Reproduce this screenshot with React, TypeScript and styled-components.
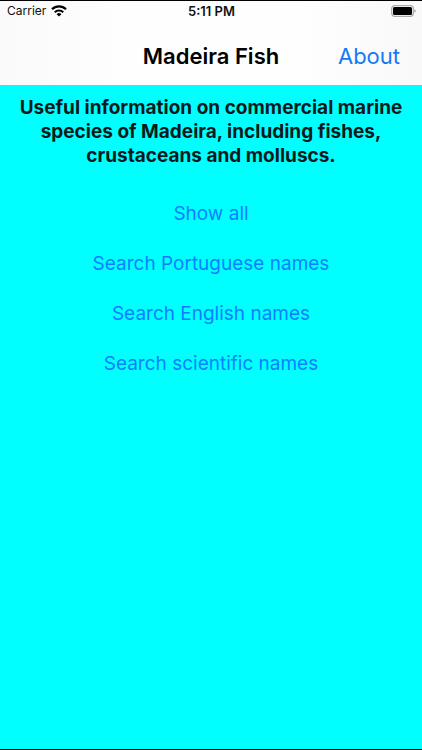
import React from "react";
import styled, { createGlobalStyle } from "styled-components";

const GlobalStyle = createGlobalStyle`
  * { box-sizing: border-box; }
  body { margin: 0; background: #00ffff; font-family: Inter, "Liberation Sans", sans-serif; }
`;
const Screen = styled.div`
  min-height: 100vh;
  display: flex;
  flex-direction: column;
  background: #00ffff;
  border-top: 1px solid #000;
  border-bottom: 1px solid #000;
`;
const TopArea = styled.header`
  background: linear-gradient(90deg, #fafafa, #fefefe 30%, #fefefe 70%, #f9f9f9);
`;
const StatusBar = styled.div`
  height: 20px;
  padding: 0 6px 0 7px;
  display: grid;
  grid-template-columns: 1fr auto 1fr;
  align-items: center;
  font-size: 12px;
  line-height: 16px;
  color: #111;
`;
const Carrier = styled.div`
  display: flex;
  align-items: center;
  gap: 5px;
`;
const Clock = styled.time`
  font-size: 13px;
  font-weight: 600;
`;
const Battery = styled.svg`
  justify-self: end;
`;
const NavBar = styled.nav`
  height: 64px;
  padding: 6px 22px 0;
  display: grid;
  grid-template-columns: 1fr auto 1fr;
  align-items: center;
`;
const Title = styled.h1`
  grid-column: 2;
  margin: 0;
  font-size: 22px;
  line-height: 28px;
  font-weight: 600;
  color: #000;
`;
const NavButton = styled.button`
  justify-self: end;
  border: 0;
  padding: 0;
  background: none;
  font: inherit;
  font-size: 22px;
  line-height: 28px;
  color: #1579f4;
`;
const Main = styled.main`
  display: flex;
  flex-direction: column;
  align-items: center;
  padding: 11px 12px;
`;
const Intro = styled.p`
  margin: 0 0 32px;
  font-size: 19px;
  line-height: 24px;
  font-weight: 700;
  text-align: center;
  color: #0b1a1a;
`;
const Menu = styled.div`
  display: flex;
  flex-direction: column;
  align-items: center;
  gap: 22px;
`;
const MenuButton = styled.button`
  border: 0;
  padding: 0;
  background: none;
  font: inherit;
  font-size: 19px;
  line-height: 28px;
  color: #0a7fff;
`;

const actions = ["Show all", "Search Portuguese names", "Search English names", "Search scientific names"];

export default function App() {
  return (
    <Screen>
      <GlobalStyle />
      <TopArea>
        <StatusBar>
          <Carrier>
            Carrier
            <svg width="16" height="12" viewBox="0 0 16 12" aria-hidden="true">
              <g fill="none" stroke="#000" strokeWidth="2.2">
                <path d="M1 4.3a10 10 0 0 1 14 0" />
                <path d="M3.8 7.2a6 6 0 0 1 8.4 0" />
              </g>
              <path d="M8 11.6 5.6 9.2a3.4 3.4 0 0 1 4.8 0z" />
            </svg>
          </Carrier>
          <Clock>5:11 PM</Clock>
          <Battery width="25" height="12" viewBox="0 0 25 12" aria-hidden="true">
            <rect x="0.7" y="0.7" width="21.6" height="10.6" rx="3" fill="#fff" stroke="#aaa" strokeWidth="1.3" />
            <rect x="2" y="2" width="19" height="8" rx="1.5" />
            <path d="M23.5 4.2a2 2 0 0 1 0 3.6z" fill="#888" />
          </Battery>
        </StatusBar>
        <NavBar>
          <Title>Madeira Fish</Title>
          <NavButton type="button">About</NavButton>
        </NavBar>
      </TopArea>
      <Main>
        <Intro>Useful information on commercial marine species of Madeira, including fishes, crustaceans and molluscs.</Intro>
        <Menu>
          {actions.map((a) => <MenuButton type="button" key={a}>{a}</MenuButton>)}
        </Menu>
      </Main>
    </Screen>
  );
}
